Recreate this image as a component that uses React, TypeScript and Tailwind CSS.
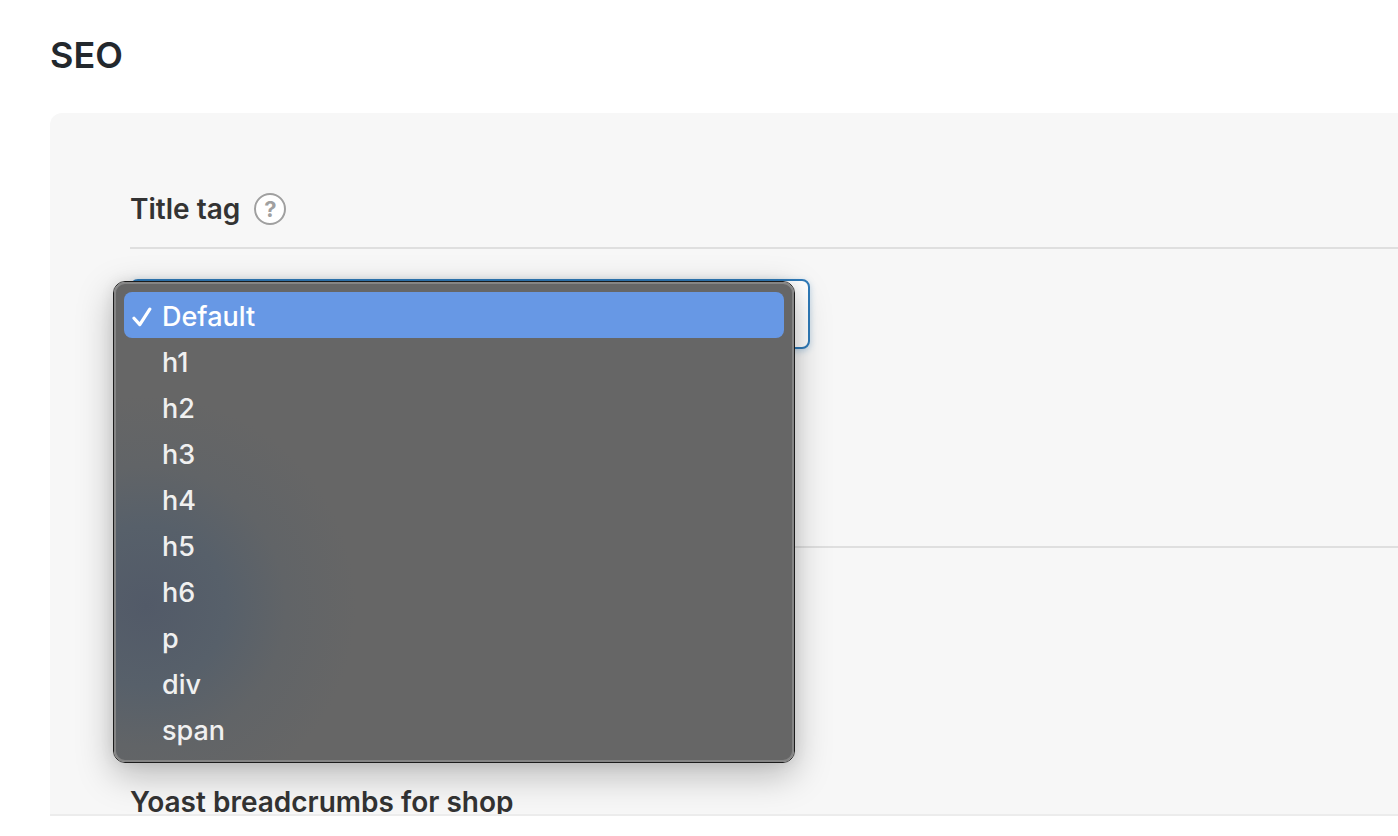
import { useState } from "react";
import type { ReactNode } from "react";

const TAGS = ["Default", "h1", "h2", "h3", "h4", "h5", "h6", "p", "div", "span"];

function HelpIcon() {
  return (
    <button
      type="button"
      aria-label="Help"
      className="flex size-8 items-center justify-center rounded-full border-2 border-[#a0a0a0] bg-white text-[#a0a0a0]"
    >
      <span className="text-[22px] font-bold leading-none">?</span>
    </button>
  );
}

function FieldHeader({ children }: { children?: ReactNode }) {
  return (
    <div className="flex h-14 items-start gap-3.5 border-b-2 border-[#dfdfdf] text-[28px] font-semibold leading-8">
      {children}
    </div>
  );
}

function CheckMark() {
  return (
    <svg viewBox="0 0 20 20" className="size-5" fill="none" aria-hidden="true">
      <path
        d="M2 11.2 7.8 17.6 17.8 2.2"
        stroke="currentColor"
        strokeWidth="3.2"
        strokeLinecap="round"
        strokeLinejoin="round"
      />
    </svg>
  );
}

function TagSelect() {
  const [value, setValue] = useState("Default");

  return (
    <div className="relative mt-[30px] max-w-[680px]">
      <select
        id="title-tag"
        value={value}
        onChange={(e) => setValue(e.target.value)}
        className="block h-[70px] w-full appearance-none rounded-lg border-2 border-[#2f7ab8] bg-white px-8 text-[28px] shadow-[0_2px_6px_rgba(47,122,184,0.3)]"
      >
        {TAGS.map((tag) => (
          <option key={tag}>{tag}</option>
        ))}
      </select>
      <div className="absolute -left-[17px] top-0.5 w-[682px] rounded-xl border border-[#1c1c1c] shadow-[0_12px_36px_rgba(0,0,0,0.26),0_0_14px_rgba(0,0,0,0.08)]">
        <div
          role="listbox"
          aria-label="Title tag"
          className="rounded-[11px] border-2 border-[#858585] bg-[#666666] bg-[radial-gradient(circle_at_30px_322px,#525a68_0px,#57606a_80px,#616467_140px,#666666_210px)] p-2"
        >
          {TAGS.map((tag) => (
            <button
              key={tag}
              type="button"
              role="option"
              aria-selected={tag === value}
              onClick={() => setValue(tag)}
              className={
                tag === value
                  ? "flex h-[46px] w-full items-center gap-2.5 rounded-lg bg-[#6798e5] px-2 pt-1 text-left text-[27px] font-medium text-white"
                  : "flex h-[46px] w-full items-center gap-2.5 rounded-lg px-2 pt-1 text-left text-[27px] font-medium text-[#f0f0f0]"
              }
            >
              <span className="w-5 shrink-0">{tag === value && <CheckMark />}</span>
              {tag}
            </button>
          ))}
        </div>
      </div>
    </div>
  );
}

export default function App() {
  return (
    <main className="bg-white pl-[50px] pt-[31px] font-[Inter,sans-serif] text-[#333333]">
      <h1 className="text-[36px] font-semibold leading-[48px] text-[#23282d]">SEO</h1>
      <section className="mt-[34px] overflow-hidden rounded-tl-xl border-b-2 border-[#ececec] bg-[#f7f7f7] pl-20 pt-20">
        <FieldHeader>
          <label htmlFor="title-tag">Title tag</label>
          <HelpIcon />
        </FieldHeader>
        <TagSelect />
        <div className="mt-[143px]">
          <FieldHeader />
        </div>
        <h2 className="mt-[238px] h-7 text-[28px] font-semibold leading-8">
          Yoast breadcrumbs for shop
        </h2>
      </section>
    </main>
  );
}
